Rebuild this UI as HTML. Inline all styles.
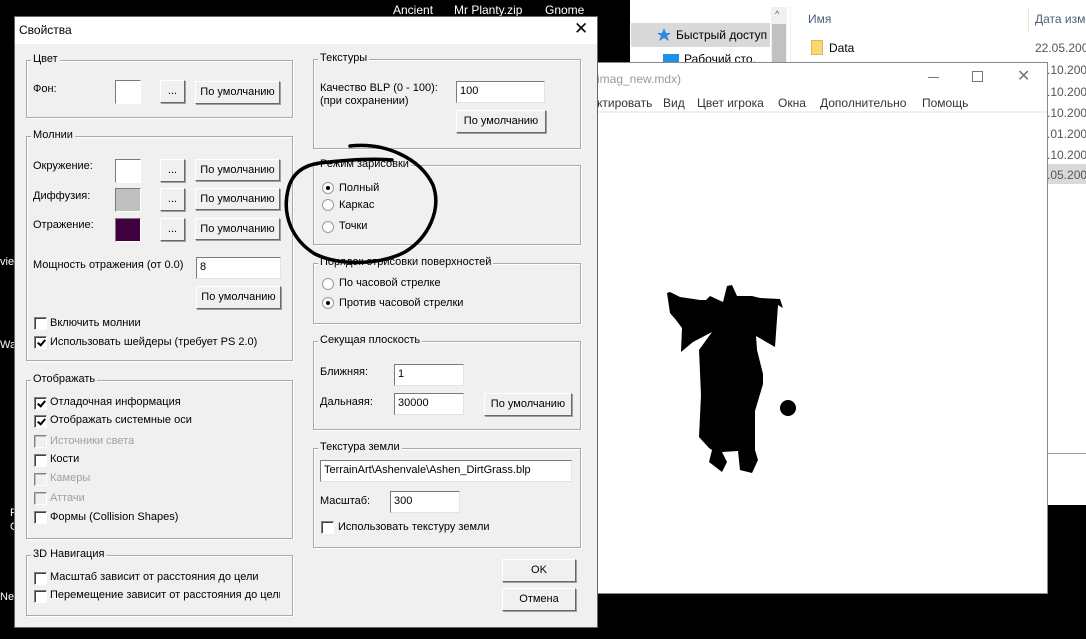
<!DOCTYPE html>
<html><head><meta charset="utf-8"><style>
*{margin:0;padding:0;box-sizing:border-box}
body{width:1086px;height:639px;background:#000;position:relative;overflow:hidden;font-family:"Liberation Sans","DejaVu Sans",sans-serif;font-size:11px;color:#000}
.a{position:absolute;white-space:nowrap}
.gb{position:absolute;border:1px solid #a9a9a9;box-shadow:1px 1px 0 #fff inset,1px 1px 0 #fff}
.lg{position:absolute;background:#f0f0f0;padding:0 2px;top:-8px;left:4px;white-space:nowrap}
.ed{position:absolute;background:#fff;border:1px solid;border-color:#7a7a7a #e3e3e3 #e3e3e3 #7a7a7a;padding:3px 3px;font-size:11px}
.bt{position:absolute;background:#f0f0f0;border:1px solid;border-color:#fff #696969 #696969 #fff;box-shadow:1px 1px 0 #a0a0a0;text-align:center;font-size:11px}
.sw{position:absolute;border:1px solid;border-color:#7a7a7a #fff #fff #7a7a7a;width:26px;height:24px}
.cb{position:absolute;width:13px;height:13px;background:#fff;border:1px solid;border-color:#808080 #fff #fff #808080;box-shadow:inset 1px 1px 0 #404040}
.cb.k::after{content:"";position:absolute;left:4px;top:1px;width:3px;height:6px;border:solid #000;border-width:0 2px 2px 0;transform:rotate(40deg)}
.cb.d{background:#f0f0f0;box-shadow:inset 1px 1px 0 #c0c0c0}
.rd{position:absolute;width:12px;height:12px;border-radius:50%;background:#fff;border:1px solid #9a9a9a}
.rd.k::after{content:"";position:absolute;left:3px;top:3px;width:4px;height:4px;border-radius:50%;background:#000}
.gr{color:#a0a0a0}
.w{color:#fff}
</style></head><body>
<div class="a w" style="left:393px;top:3px;font-size:12px">Ancient</div>
<div class="a w" style="left:454px;top:3px;font-size:12px">Mr Planty.zip</div>
<div class="a w" style="left:545px;top:3px;font-size:12px">Gnome</div>
<div class="a w" style="left:0;top:256px">vie</div>
<div class="a w" style="left:0;top:339px">Wa</div>
<div class="a w" style="left:10px;top:507px">F</div>
<div class="a w" style="left:10px;top:521px">G</div>
<div class="a w" style="left:0;top:591px">Ne</div>

<div class="a" style="left:630px;top:0;width:456px;height:505px;background:#fff"></div>
<div class="a" style="left:631px;top:23px;width:139px;height:24px;background:#d9d9d9"></div>
<svg class="a" style="left:656px;top:27px" width="16" height="16"><path d="M8 1 L10 6 L15 6 L11 9 L13 14 L8 11 L3 14 L5 9 L1 6 L6 6Z" fill="#2d8ae0"/></svg>
<div class="a" style="left:676px;top:28px;font-size:12px">Быстрый доступ</div>
<div class="a" style="left:663px;top:54px;width:16px;height:12px;background:#1e90e8"></div>
<div class="a" style="left:684px;top:52px;font-size:12px">Рабочий сто.</div>
<div class="a" style="left:771px;top:7px;width:16px;height:498px;background:#f0f0f0"></div>
<div class="a" style="left:775px;top:9px;font-size:9px;color:#555">^</div>
<div class="a" style="left:772px;top:24px;width:14px;height:40px;background:#c1c1c1"></div>
<div class="a" style="left:790px;top:7px;width:1px;height:498px;background:#eee"></div>
<div class="a" style="left:808px;top:12px;font-size:12px;color:#4c607a">Имя</div>
<div class="a" style="left:1028px;top:7px;width:1px;height:25px;background:#e5e5e5"></div>
<div class="a" style="left:1035px;top:12px;font-size:12px;color:#4c607a">Дата измен</div>
<div class="a" style="left:811px;top:40px;width:12px;height:15px;background:#f8d775;border:1px solid #e0b850"></div>
<div class="a" style="left:829px;top:41px;font-size:12px">Data</div>
<div class="a" style="left:1035px;top:41px;font-size:12px;color:#555">22.05.2009</div>
<div class="a" style="left:1047px;top:164px;width:39px;height:20px;background:#d9d9d9"></div>
<div class="a" style="left:1047px;top:63px;font-size:12px;color:#555">.10.2007</div>
<div class="a" style="left:1047px;top:85px;font-size:12px;color:#555">.10.2007</div>
<div class="a" style="left:1047px;top:106px;font-size:12px;color:#555">.10.2007</div>
<div class="a" style="left:1047px;top:127px;font-size:12px;color:#555">.01.2008</div>
<div class="a" style="left:1047px;top:148px;font-size:12px;color:#555">.10.2005</div>
<div class="a" style="left:1047px;top:168px;font-size:12px;color:#555">.05.2009</div>
<div class="a" style="left:1047px;top:453px;width:39px;height:1px;background:#a0a0a0"></div>

<div class="a" style="left:597px;top:62px;width:451px;height:532px;background:#fff;border:1px solid #888;border-left:none"></div>
<div class="a" style="left:597px;top:72px;font-size:12px;color:#999">imag_new.mdx)</div>
<div class="a" style="left:928px;top:77px;width:11px;height:1px;background:#777"></div>
<div class="a" style="left:972px;top:71px;width:11px;height:11px;border:1px solid #777"></div>
<div class="a" style="left:1017px;top:66px;font-size:16px;color:#777">✕</div>
<div class="a" style="left:597px;top:96px;font-size:12px;color:#333">ктировать</div>
<div class="a" style="left:663px;top:96px;font-size:12px;color:#333">Вид</div>
<div class="a" style="left:697px;top:96px;font-size:12px;color:#333">Цвет игрока</div>
<div class="a" style="left:778px;top:96px;font-size:12px;color:#333">Окна</div>
<div class="a" style="left:820px;top:96px;font-size:12px;color:#333">Дополнительно</div>
<div class="a" style="left:922px;top:96px;font-size:12px;color:#333">Помощь</div>
<div class="a" style="left:597px;top:111px;width:450px;height:2px;background:#f0f0f0"></div>
<svg class="a" style="left:0;top:0" width="1086" height="639">
<polygon fill="#000" points="667,293 670,313 676,320 682,328 681,352 693,342 712,332 699,350 701,395 699,437 709,448 712,450 709,462 722,472 727,462 722,452 738,451 740,470 752,473 758,460 755,450 755,411 763,384 763,374 757,350 756,336 775,347 778,305 783,308 780,299 760,298 752,296 737,296 732,285 727,286 723,302 710,296 706,300 700,300 680,297 670,292"/>
<circle cx="788" cy="408" r="8" fill="#000"/>
</svg>

<div class="a" style="left:14px;top:16px;width:584px;height:612px;background:#f0f0f0;border:1px solid #666"></div>
<div class="a" style="left:15px;top:17px;width:582px;height:27px;background:#fff"></div>
<div class="a" style="left:19px;top:23px;font-size:12px">Свойства</div>
<div class="a" style="left:574px;top:19px;font-size:17px;font-weight:300">✕</div>

<div class="gb" style="left:26px;top:60px;width:267px;height:58px"><div class="lg">Цвет</div></div>
<div class="a" style="left:33px;top:83px">Фон:</div>
<div class="sw" style="left:115px;top:80px;background:#fff"></div>
<div class="bt" style="left:160px;top:80px;width:25px;height:23px;line-height:21px">...</div>
<div class="bt" style="left:195px;top:81px;width:85px;height:23px;line-height:21px">По умолчанию</div>

<div class="gb" style="left:26px;top:136px;width:267px;height:225px"><div class="lg">Молнии</div></div>
<div class="a" style="left:33px;top:160px">Окружение:</div>
<div class="a" style="left:33px;top:190px">Диффузия:</div>
<div class="a" style="left:33px;top:219px">Отражение:</div>
<div class="sw" style="left:115px;top:159px;background:#fff"></div>
<div class="sw" style="left:115px;top:188px;background:#c0c0c0"></div>
<div class="sw" style="left:115px;top:218px;background:#400040"></div>
<div class="bt" style="left:160px;top:159px;width:25px;height:23px;line-height:21px">...</div>
<div class="bt" style="left:160px;top:188px;width:25px;height:23px;line-height:21px">...</div>
<div class="bt" style="left:160px;top:218px;width:25px;height:23px;line-height:21px">...</div>
<div class="bt" style="left:195px;top:159px;width:85px;height:22px;line-height:20px">По умолчанию</div>
<div class="bt" style="left:195px;top:188px;width:85px;height:22px;line-height:20px">По умолчанию</div>
<div class="bt" style="left:195px;top:218px;width:85px;height:22px;line-height:20px">По умолчанию</div>
<div class="a" style="left:33px;top:259px">Мощность отражения (от 0.0)</div>
<div class="ed" style="left:196px;top:257px;width:85px;height:22px">8</div>
<div class="bt" style="left:196px;top:286px;width:85px;height:23px;line-height:21px">По умолчанию</div>
<div class="cb" style="left:34px;top:317px"></div><div class="a" style="left:50px;top:317px">Включить молнии</div>
<div class="cb k" style="left:34px;top:336px"></div><div class="a" style="left:50px;top:336px">Использовать шейдеры (требует PS 2.0)</div>

<div class="gb" style="left:26px;top:380px;width:267px;height:159px"><div class="lg">Отображать</div></div>
<div class="cb k" style="left:34px;top:397px"></div><div class="a" style="left:50px;top:396px">Отладочная информация</div>
<div class="cb k" style="left:34px;top:415px"></div><div class="a" style="left:50px;top:414px">Отображать системные оси</div>
<div class="cb d" style="left:34px;top:435px"></div><div class="a gr" style="left:50px;top:435px">Источники света</div>
<div class="cb" style="left:34px;top:454px"></div><div class="a" style="left:50px;top:453px">Кости</div>
<div class="cb d" style="left:34px;top:473px"></div><div class="a gr" style="left:50px;top:472px">Камеры</div>
<div class="cb d" style="left:34px;top:492px"></div><div class="a gr" style="left:50px;top:492px">Аттачи</div>
<div class="cb" style="left:34px;top:511px"></div><div class="a" style="left:50px;top:511px">Формы (Collision Shapes)</div>

<div class="gb" style="left:26px;top:555px;width:267px;height:61px"><div class="lg">3D Навигация</div></div>
<div class="cb" style="left:34px;top:572px"></div><div class="a" style="left:50px;top:571px">Масштаб зависит от расстояния до цели</div>
<div class="cb" style="left:34px;top:590px"></div><div class="a" style="left:50px;top:589px;width:230px;overflow:hidden">Перемещение зависит от расстояния до цели</div>

<div class="gb" style="left:313px;top:59px;width:268px;height:90px"><div class="lg">Текстуры</div></div>
<div class="a" style="left:320px;top:82px">Качество BLP (0 - 100):</div>
<div class="a" style="left:320px;top:95px">(при сохранении)</div>
<div class="ed" style="left:456px;top:81px;width:89px;height:22px">100</div>
<div class="bt" style="left:456px;top:110px;width:90px;height:23px;line-height:21px">По умолчанию</div>

<div class="gb" style="left:313px;top:165px;width:268px;height:80px"><div class="lg">Режим зарисовки</div></div>
<div class="rd k" style="left:322px;top:182px"></div><div class="a" style="left:339px;top:182px">Полный</div>
<div class="rd" style="left:322px;top:199px"></div><div class="a" style="left:339px;top:199px">Каркас</div>
<div class="rd" style="left:322px;top:221px"></div><div class="a" style="left:339px;top:220px">Точки</div>

<div class="gb" style="left:313px;top:263px;width:268px;height:61px"><div class="lg">Порядок отрисовки поверхностей</div></div>
<div class="rd" style="left:322px;top:278px"></div><div class="a" style="left:339px;top:277px">По часовой стрелке</div>
<div class="rd k" style="left:322px;top:297px"></div><div class="a" style="left:339px;top:297px">Против часовой стрелки</div>

<div class="gb" style="left:313px;top:341px;width:268px;height:89px"><div class="lg">Секущая плоскость</div></div>
<div class="a" style="left:320px;top:366px">Ближняя:</div>
<div class="a" style="left:320px;top:396px">Дальнаяя:</div>
<div class="ed" style="left:394px;top:364px;width:70px;height:22px">1</div>
<div class="ed" style="left:394px;top:393px;width:70px;height:22px">30000</div>
<div class="bt" style="left:484px;top:393px;width:88px;height:23px;line-height:21px">По умолчанию</div>

<div class="gb" style="left:313px;top:448px;width:268px;height:100px"><div class="lg">Текстура земли</div></div>
<div class="ed" style="left:320px;top:460px;width:252px;height:22px">TerrainArt\Ashenvale\Ashen_DirtGrass.blp</div>
<div class="a" style="left:320px;top:495px">Масштаб:</div>
<div class="ed" style="left:390px;top:491px;width:70px;height:22px">300</div>
<div class="cb" style="left:321px;top:521px"></div><div class="a" style="left:338px;top:521px">Использовать текстуру земли</div>

<div class="bt" style="left:502px;top:559px;width:74px;height:23px;line-height:21px">OK</div>
<div class="bt" style="left:502px;top:588px;width:74px;height:23px;line-height:21px">Отмена</div>

<svg class="a" style="left:0;top:0" width="1086" height="639">
<path d="M350 146 C385 142 420 158 433 185 C442 210 428 238 405 252 C380 265 340 266 315 254 C292 240 282 215 288 190 C292 172 305 165 320 163 C345 160 370 158 392 160" fill="none" stroke="#000" stroke-width="3.5" stroke-linecap="round"/>
</svg>
</body></html>
